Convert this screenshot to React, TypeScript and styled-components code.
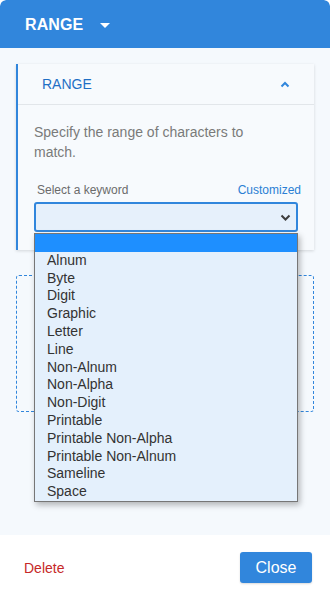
import React from 'react'
import styled, { createGlobalStyle } from 'styled-components'

const BLUE = '#3186dc'

const GlobalStyle = createGlobalStyle`
  html, body {
    margin: 0;
    padding: 0;
    background: #ffffff;
    font-family: "Liberation Sans", Arial, sans-serif;
  }
`

const KEYWORDS = [
  'Alnum',
  'Byte',
  'Digit',
  'Graphic',
  'Letter',
  'Line',
  'Non-Alnum',
  'Non-Alpha',
  'Non-Digit',
  'Printable',
  'Printable Non-Alpha',
  'Printable Non-Alnum',
  'Sameline',
  'Space',
]

const ChevronUp = () => (
  <svg width="10" height="7" viewBox="0 0 10 7">
    <path d="M1.5 5.5 L5 2 L8.5 5.5" fill="none" stroke={BLUE} strokeWidth="2" />
  </svg>
)

const ChevronDown = () => (
  <svg width="11" height="7" viewBox="0 0 11 7">
    <path d="M1.5 1.5 L5.5 5.5 L9.5 1.5" fill="none" stroke="#3d3d3d" strokeWidth="2" />
  </svg>
)

export default function App() {
  return (
    <>
      <GlobalStyle />
      <Dialog>
        <Header>
          <HeaderTitle>RANGE</HeaderTitle>
          <Caret />
        </Header>
        <Body>
          <Card>
            <CardHeader>
              <CardTitle>RANGE</CardTitle>
              <ChevronUp />
            </CardHeader>
            <CardBody>
              <Description>Specify the range of characters to match.</Description>
              <LabelRow>
                <Label>Select a keyword</Label>
                <LinkText>Customized</LinkText>
              </LabelRow>
              <SelectWrap>
                <SelectBox>
                  <ChevronDown />
                </SelectBox>
                <OptionList>
                  <Option $selected>&nbsp;</Option>
                  {KEYWORDS.map((k) => (
                    <Option key={k}>{k}</Option>
                  ))}
                </OptionList>
              </SelectWrap>
            </CardBody>
          </Card>
          <DropZone />
        </Body>
        <Footer>
          <DeleteLink>Delete</DeleteLink>
          <CloseButton>Close</CloseButton>
        </Footer>
      </Dialog>
    </>
  )
}

const Dialog = styled.div`
  width: 330px;
  height: 600px;
  display: flex;
  flex-direction: column;
  background: #ffffff;
  border-radius: 6px;
  overflow: hidden;
`

const Header = styled.div`
  height: 48px;
  box-sizing: border-box;
  flex-shrink: 0;
  display: flex;
  align-items: center;
  gap: 17px;
  padding: 2px 0 0 25px;
  background: ${BLUE};
  border-radius: 6px 6px 0 0;
`

const HeaderTitle = styled.span`
  color: #ffffff;
  font-size: 16px;
  font-weight: bold;
  letter-spacing: 0.1px;
`

const Caret = styled.span`
  width: 0;
  height: 0;
  margin-top: 1px;
  border-left: 5px solid transparent;
  border-right: 5px solid transparent;
  border-top: 5px solid #ffffff;
`

const Body = styled.div`
  flex: 1;
  display: flex;
  flex-direction: column;
  gap: 25px;
  padding: 16px;
  background: #f5f9fd;
`

const Card = styled.div`
  background: #f7fafd;
  border-left: 2px solid ${BLUE};
  box-shadow: 0 1px 3px rgba(0, 0, 0, 0.14);
`

const CardHeader = styled.div`
  height: 40px;
  display: flex;
  align-items: center;
  justify-content: space-between;
  padding: 0 24px 0 24px;
  border-bottom: 1px solid #e2e6ea;
`

const CardTitle = styled.span`
  color: #1f6fc5;
  font-size: 14px;
`

const CardBody = styled.div`
  padding: 17px 16px 18px 16px;
`

const Description = styled.p`
  margin: 0;
  width: 240px;
  color: #7a7a7a;
  font-size: 14px;
  line-height: 20px;
`

const LabelRow = styled.div`
  display: flex;
  justify-content: space-between;
  align-items: center;
  margin: 21px -3px 5px 3px;
  font-size: 12px;
`

const Label = styled.span`
  color: #6b6b6b;
`

const LinkText = styled.span`
  color: #2a7fd4;
`

const SelectWrap = styled.div`
  position: relative;
`

const SelectBox = styled.div`
  box-sizing: border-box;
  height: 30px;
  display: flex;
  align-items: center;
  justify-content: flex-end;
  padding-right: 5px;
  background: #e6f0fb;
  border: 2px solid ${BLUE};
  border-radius: 3px;
`

const OptionList = styled.div`
  position: absolute;
  top: 31px;
  left: 0;
  width: 264px;
  box-sizing: border-box;
  padding: 0;
  border: 1px solid #767676;
  background: #e4f0fc;
  box-shadow: 2px 3px 6px rgba(0, 0, 0, 0.28);
  z-index: 10;
`

const Option = styled.div<{ $selected?: boolean }>`
  height: 17.8px;
  line-height: 17.8px;
  padding-left: 12px;
  font-size: 14px;
  color: #333333;
  background: ${(p) => (p.$selected ? '#1e8fff' : 'transparent')};
`

const DropZone = styled.div`
  height: 137px;
  box-sizing: border-box;
  border: 1px dashed ${BLUE};
  border-radius: 3px;
`

const Footer = styled.div`
  height: 65px;
  flex-shrink: 0;
  display: flex;
  align-items: center;
  justify-content: space-between;
  padding: 0 18px 0 24px;
  background: #ffffff;
`

const DeleteLink = styled.span`
  color: #c62828;
  font-size: 14px;
`

const CloseButton = styled.button`
  width: 72px;
  height: 31px;
  border: none;
  border-radius: 3px;
  background: ${BLUE};
  color: #ffffff;
  font-family: "Liberation Sans", Arial, sans-serif;
  font-size: 16px;
  box-shadow: 0 1px 2px rgba(0, 0, 0, 0.15);
`
